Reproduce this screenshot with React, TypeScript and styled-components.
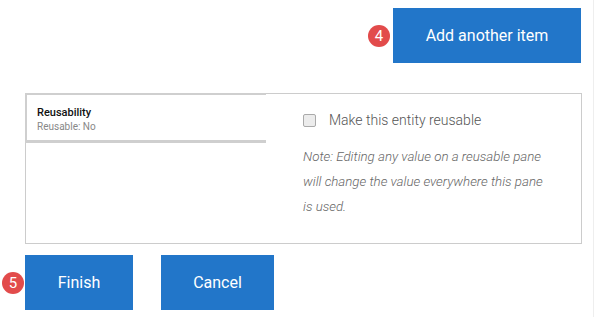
import styled, { createGlobalStyle } from "styled-components";

const GlobalStyle = createGlobalStyle`
  html, body {
    margin: 0;
    padding: 0;
    background: #fff;
  }
  body {
    font-family: Roboto, "Liberation Sans", sans-serif;
  }
`;

const Page = styled.div`
  width: 594px;
  height: 317px;
  border-right: 1px solid #eeeeee;
  padding-top: 8px;
  box-sizing: border-box;
`;

const TopRow = styled.div`
  display: flex;
  justify-content: flex-end;
  align-items: center;
  gap: 3px;
  padding-right: 12px;
`;

const BottomRow = styled.div`
  display: flex;
  align-items: center;
  gap: 1px;
  padding-left: 2px;
  margin-top: 11px;
`;

const Badge = styled.span`
  width: 22px;
  height: 22px;
  border-radius: 50%;
  background: #e24b4b;
  color: #fff;
  font-size: 15px;
  line-height: 22px;
  text-align: center;
  flex: none;
`;

const Button = styled.button<{ $w: number; $gap?: number }>`
  width: ${(p) => p.$w}px;
  height: 55px;
  margin-left: ${(p) => p.$gap ?? 0}px;
  background: #2276c9;
  border: none;
  color: #fff;
  font-family: Roboto, "Liberation Sans", sans-serif;
  font-size: 16px;
  font-weight: 400;
  padding: 0;
  cursor: pointer;
`;

const Panel = styled.div`
  margin: 30px 0 0 25px;
  width: 557px;
  height: 151px;
  border: 1px solid #cccccc;
  box-sizing: border-box;
  display: flex;
  align-items: flex-start;
`;

const Tab = styled.div`
  width: 241px;
  height: 50px;
  box-sizing: border-box;
  margin: -1px 0 0 -1px;
  border-top: 2px solid #cfcfcf;
  border-left: 2px solid #cfcfcf;
  border-bottom: 3px solid #cfcfcf;
  padding: 11px 10px 0;
  flex: none;
`;

const TabTitle = styled.div`
  font-size: 11px;
  font-weight: 500;
  color: #111;
  line-height: 14px;
`;

const TabSub = styled.div`
  font-size: 10px;
  color: #888;
  line-height: 13px;
`;

const Body = styled.div`
  padding: 19px 0 0 37px;
  width: 248px;
`;

const CheckRow = styled.label`
  display: flex;
  align-items: center;
  gap: 13px;
  font-size: 14px;
  font-weight: 300;
  color: #555;
  height: 14px;
`;

const Box = styled.span`
  width: 11px;
  height: 11px;
  border: 1px solid #aaa;
  border-radius: 2px;
  background: #ececec;
  flex: none;
`;

const Note = styled.p`
  margin: 17px 0 0;
  font-size: 13.3px;
  font-style: italic;
  font-weight: 300;
  line-height: 25px;
  color: #666;
`;

export default function App() {
  return (
    <>
      <GlobalStyle />
      <Page>
        <TopRow>
          <Badge>4</Badge>
          <Button $w={188}>Add another item</Button>
        </TopRow>
        <Panel>
          <Tab>
            <TabTitle>Reusability</TabTitle>
            <TabSub>Reusable: No</TabSub>
          </Tab>
          <Body>
            <CheckRow>
              <Box />
              Make this entity reusable
            </CheckRow>
            <Note>
              Note: Editing any value on a reusable pane will change the value
              everywhere this pane is used.
            </Note>
          </Body>
        </Panel>
        <BottomRow>
          <Badge>5</Badge>
          <Button $w={108}>Finish</Button>
          <Button $w={113} $gap={27}>
            Cancel
          </Button>
        </BottomRow>
      </Page>
    </>
  );
}
